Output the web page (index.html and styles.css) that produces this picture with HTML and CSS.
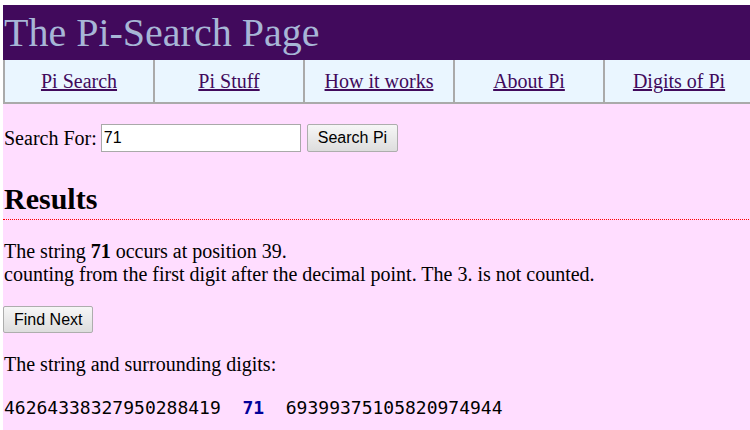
FILE: index.html
```html
<!DOCTYPE html>
<html>
<head>
<meta charset="utf-8">
<title>The Pi-Search Page</title>
<link rel="stylesheet" href="styles.css">
</head>
<body>
<div class="page">
  <header class="banner">
    <h1 class="title">The Pi-Search Page</h1>
  </header>
  <nav class="nav">
    <a class="nav-item" href="#">Pi Search</a>
    <a class="nav-item" href="#">Pi Stuff</a>
    <a class="nav-item" href="#">How it works</a>
    <a class="nav-item" href="#">About Pi</a>
    <a class="nav-item" href="#">Digits of Pi</a>
  </nav>
  <main class="content">
    <form class="search">
      <label class="search-label" for="q">Search For:</label>
      <input class="search-input" id="q" type="text" value="71">
      <button class="btn" type="button">Search Pi</button>
    </form>
    <h2 class="results-title">Results</h2>
    <p class="result">The string <b>71</b> occurs at position 39.<br>counting from the first digit after the decimal point. The 3. is not counted.</p>
    <button class="btn btn-next" type="button">Find Next</button>
    <p class="surround">The string and surrounding digits:</p>
    <p class="digits">46264338327950288419  <b class="match">71</b>  69399375105820974944</p>
  </main>
</div>
</body>
</html>
```
FILE: styles.css
```css
html {
  overflow: hidden;
  background: #ffffff;
}
body {
  margin: 0;
  padding: 5px 0 0 3px;
  font-family: "Liberation Serif", "Times New Roman", serif;
  font-size: 20px;
  color: #000000;
}
.page {
  width: 750px;
  background: #ffddff;
  min-height: 430px;
}
.banner {
  background: #410a5c;
  height: 55px;
}
.title {
  margin: 0;
  padding: 5px 0 0 1px;
  font-weight: normal;
  font-size: 40px;
  line-height: 46px;
  color: #a7b6d6;
}
.nav {
  display: grid;
  grid-template-columns: repeat(5, 1fr);
  background: #eaf6ff;
  border-bottom: 2px solid #aaaaaa;
}
.nav-item {
  display: block;
  text-align: center;
  border-left: 2px solid #aaaaaa;
  height: 42px;
  line-height: 42px;
  color: #410a5c;
  text-decoration: underline;
}
.content {
  padding: 0;
}
.search {
  display: flex;
  align-items: center;
  padding: 20px 0 0 1px;
  margin: 0;
}
.search-label {
  margin-right: 4px;
}
.search-input {
  box-sizing: border-box;
  width: 200px;
  height: 28px;
  margin: 0 6px 0 0;
  padding: 1px 2px;
  border: 1px solid #a9a9a9;
  font-family: "Liberation Sans", Arial, sans-serif;
  font-size: 16px;
  background: #ffffff;
}
.btn {
  box-sizing: border-box;
  height: 28px;
  padding: 0 10px;
  border: 1px solid #adadad;
  border-radius: 2px;
  background: linear-gradient(#f6f6f6, #dddddd);
  font-family: "Liberation Sans", Arial, sans-serif;
  font-size: 16px;
  color: #000000;
}
.results-title {
  margin: 30px 0 0 0;
  padding: 0 0 3px 1px;
  font-size: 30px;
  line-height: 34px;
  border-bottom: 1px dotted #ff0000;
}
.result {
  margin: 20px 0 20px 1px;
  line-height: 23px;
}
.btn-next {
  height: 27px;
  padding: 0 10px;
}
.surround {
  margin: 20px 0 20px 1px;
  line-height: 23px;
}
.digits {
  margin: 0 0 0 1px;
  white-space: pre;
  font-family: "DejaVu Sans Mono", monospace;
  font-size: 18px;
  line-height: 23px;
}
.match {
  color: #000099;
}
```
